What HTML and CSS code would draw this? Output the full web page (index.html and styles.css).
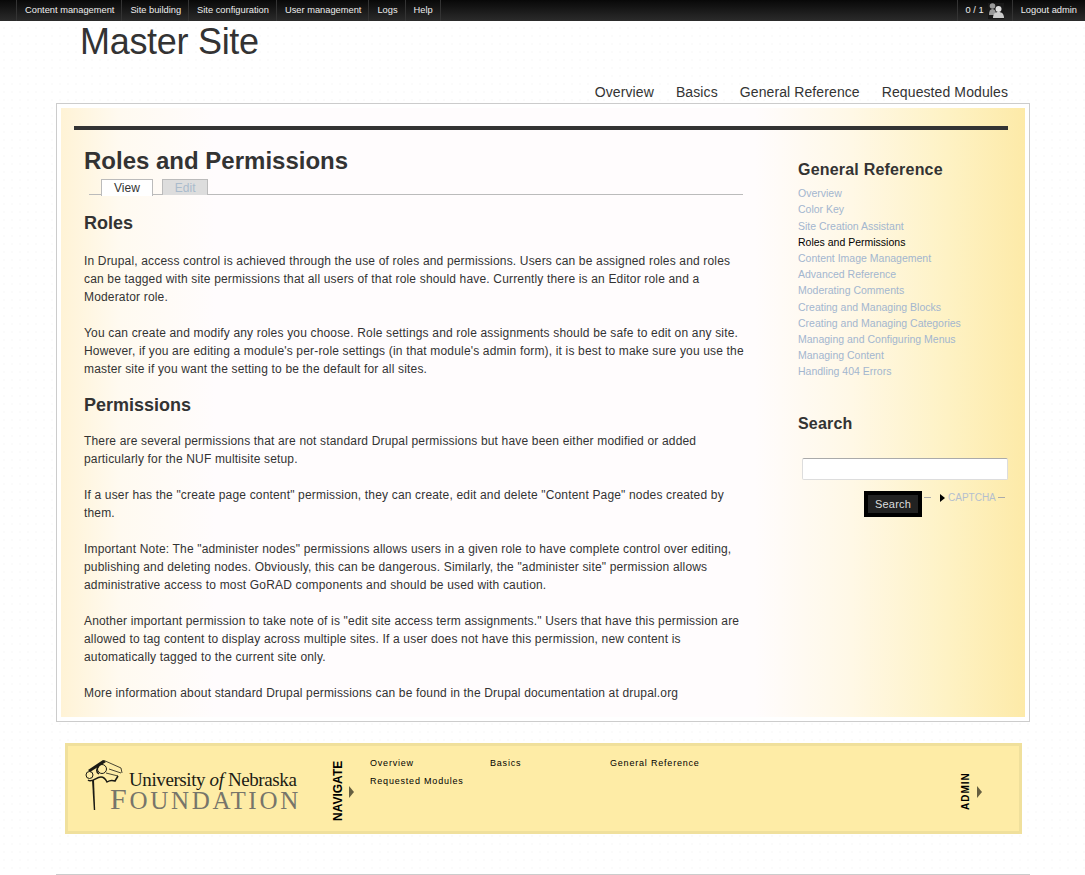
FILE: index.html
```html
<!DOCTYPE html>
<html lang="en">
<head>
	<meta charset="UTF-8">
	<title>Roles and Permissions | Master Site</title>
	<link rel="stylesheet" href="styles.css">
</head>
<body>
	<div class="adminbar">
		<ul class="adminmenu">
			<li>Content management</li>
			<li>Site building</li>
			<li>Site configuration</li>
			<li>User management</li>
			<li>Logs</li>
			<li>Help</li>
		</ul>
		<ul class="adminuser">
			<li><span class="count">0 / 1</span>
				<svg class="users" width="16" height="16" viewBox="0 0 16 16">
					<circle cx="4.500" cy="3" r="2.800" fill="#999"/>
					<path d="M1 12c0-4 1-6 3.500-6S8 8 8 12z" fill="#999"/>
					<circle cx="10.500" cy="6" r="3" fill="#ddd"/>
					<path d="M5 15c0-4 2-6 5.500-6S16 11 16 15z" fill="#ccc"/>
				</svg>
			</li>
			<li>Logout admin</li>
		</ul>
	</div>

	<div class="site">
		<div class="sitename">Master Site</div>
		<ul class="topnav">
			<li>Overview</li>
			<li>Basics</li>
			<li>General Reference</li>
			<li>Requested Modules</li>
		</ul>

		<div class="frame">
			<div class="panel">
				<div class="rule"></div>
				<div class="columns">
					<div class="content">
						<h1>Roles and Permissions</h1>
						<ul class="tabs">
							<li class="active">View</li>
							<li>Edit</li>
						</ul>
						<h2>Roles</h2>
						<p>In Drupal, access control is achieved through the use of roles and permissions. Users can be assigned roles and roles can be tagged with site permissions that all users of that role should have. Currently there is an Editor role and a Moderator role.</p>
						<p>You can create and modify any roles you choose. Role settings and role assignments should be safe to edit on any site. However, if you are editing a module's per-role settings (in that module's admin form), it is best to make sure you use the master site if you want the setting to be the default for all sites.</p>
						<h2>Permissions</h2>
						<p>There are several permissions that are not standard Drupal permissions but have been either modified or added particularly for the NUF multisite setup.</p>
						<p>If a user has the "create page content" permission, they can create, edit and delete "Content Page" nodes created by them.</p>
						<p>Important Note: The "administer nodes" permissions allows users in a given role to have complete control over editing, publishing and deleting nodes. Obviously, this can be dangerous. Similarly, the "administer site" permission allows administrative access to most GoRAD components and should be used with caution.</p>
						<p>Another important permission to take note of is "edit site access term assignments." Users that have this permission are allowed to tag content to display across multiple sites. If a user does not have this permission, new content is automatically tagged to the current site only.</p>
						<p>More information about standard Drupal permissions can be found in the Drupal documentation at drupal.org</p>
					</div>
					<div class="sidebar">
						<h3>General Reference</h3>
						<ul class="sidemenu">
							<li>Overview</li>
							<li>Color Key</li>
							<li>Site Creation Assistant</li>
							<li class="current">Roles and Permissions</li>
							<li>Content Image Management</li>
							<li>Advanced Reference</li>
							<li>Moderating Comments</li>
							<li>Creating and Managing Blocks</li>
							<li>Creating and Managing Categories</li>
							<li>Managing and Configuring Menus</li>
							<li>Managing Content</li>
							<li>Handling 404 Errors</li>
						</ul>
						<h3 class="searchtitle">Search</h3>
						<input class="searchbox" type="text">
						<div class="searchrow">
							<button class="searchbtn" type="button">Search</button>
							<span class="dash"></span>
							<span class="arrow"></span>
							<span class="captcha">CAPTCHA</span>
							<span class="dash"></span>
						</div>
					</div>
				</div>
			</div>
		</div>

		<div class="footer">
			<div class="logo">
				<svg class="capital" width="42" height="52" viewBox="0 0 42 52">
					<path d="M3 10 L18 0 L21 2 L5 12 Z" fill="#1a1a14"/>
					<path d="M18 0 L36 8 L37 13 M24 9 L36 13 M21 13 L33 16" fill="none" stroke="#1a1a14" stroke-width=".8"/>
					<circle cx="4.500" cy="15" r="3.500" fill="none" stroke="#1a1a14" stroke-width="1"/>
					<circle cx="17" cy="9" r="4.500" fill="none" stroke="#1a1a14" stroke-width="1"/>
					<path d="M14 6c-3 3-3 6 0 8M3 20c4 3 8-3 13-3 3 0 5 3 6 5 3-2 5-2 8-1l3-5" fill="none" stroke="#1a1a14" stroke-width="1.500"/>
					<path d="M7 20 L9 20 L10.200 50 L8.800 50 Z" fill="#1a1a14"/>
				</svg>
				<div class="wordmark">
					<div class="uni">University <i>of</i> Nebraska</div>
					<div class="found">Foundation</div>
				</div>
			</div>
			<div class="vlabel nav-label">NAVIGATE</div>
			<span class="footarrow"></span>
			<ul class="footmenu">
				<li>Overview</li>
				<li>Basics</li>
				<li>General Reference</li>
				<li>Requested Modules</li>
			</ul>
			<div class="vlabel admin-label">ADMIN</div>
			<span class="footarrow"></span>
		</div>

		<div class="bottomline"></div>
	</div>
</body>
</html>
```

FILE: styles.css
```css
html,body,ul,li,p,h1,h2,h3{margin: 0;padding: 0;}
ul{list-style: none;}
body{font:12px/18px "Liberation Sans",Arial,sans-serif;color: #333;background-color: #fff;background-image: radial-gradient(#fbfbfb 1px,transparent 1px);background-size: 8px 8px;}

.adminbar{display: flex;justify-content: space-between;height: 21px;background: linear-gradient(#080808,#2b2b2b);color: #eee;font-size: 9.3px;line-height: 21px;}
.adminmenu{display: flex;margin-left: 16px;}
.adminmenu li{padding: 0 7px 0 8px;border-left: 1px solid #333;}
.adminmenu li:last-child{border-right: 1px solid #333;}
.adminuser{display: flex;}
.adminuser li{padding: 0 8px;border-left: 1px solid #333;display: flex;align-items: center;}
.count{margin-right: 4px;}
.users{background: #181818;}

.site{width: 974px;margin-left: 56px;}
.sitename{margin-left: 24px;height: 42px;font-size: 36px;line-height: 42px;letter-spacing: -.3px;color: #333;}
.topnav{display: flex;justify-content: flex-end;gap: 22px;padding: 19px 22px 1px 0;font-size: 14px;line-height: 20px;letter-spacing: .1px;}

.frame{border: 1px solid #ccc;padding: 4px;background: #fff;}
.panel{height: 591px;padding: 18px 17px 0 13px;background: linear-gradient(90deg,#fff3d6 0,#fffaf0 6%,#fffcfd 16%,#fffcfd 72%,#fff8e6 82%,#fef2c4 92%,#fdeaa8 100%);}
.rule{height: 4px;background: #333;}
.columns{display: flex;padding-left: 10px;}
.content{width: 659px;letter-spacing: .17px;}
.content h1{margin-top: 18px;font-size: 24px;line-height: 26px;letter-spacing: 0;}
.tabs{display: flex;margin: 5px 0 0 5px;padding-left: 12px;border-bottom: 1px solid #bbb;height: 15px;letter-spacing: 0;}
.tabs li{height: 15px;margin-right: 9px;padding: 0 12px;border: 1px solid #bbb;border-bottom: 0;background: #ddd;color: #aabbcc;line-height: 16px;}
.tabs li.active{height: 16px;background: #fff;color: #333;}
.content h2{margin: 18px 0 19px;font-size: 18px;line-height: 20px;letter-spacing: 0;}
.content p{margin: 0 -6px 18px 0;}
.content p + h2{margin: -1px 0 17px;}

.sidebar{width: 210px;margin-left: 55px;}
.sidebar h3{margin-top: 30px;font-size: 16px;line-height: 20px;letter-spacing: .2px;}
.sidemenu{margin-top: 5.2px;font-size: 10.5px;line-height: 16.2px;color: #a3b6cf;}
.sidemenu li.current{color: #000;}
.sidebar h3.searchtitle{margin-top: 34.8px;}
.searchbox{display: block;box-sizing: border-box;width: 206px;height: 22px;margin: 24px 0 0 4px;border: 1px solid #ddd;border-top-color: #aaa;border-radius: 2px;background: #fff;}
.searchrow{display: flex;align-items: flex-start;margin-top: 11px;margin-left: 66px;height: 26px;}
.searchbtn{width: 58px;height: 26px;padding: 0;border: 4px solid #000;background: #222;color: #ddd;font: 11px "Liberation Sans",Arial,sans-serif;letter-spacing: .2px;}
.dash{width: 7px;height: 1px;background: #aaa;margin: 6px 0 0 2px;}
.arrow{margin: 3px 0 0 9px;border-left: 5px solid #000;border-top: 4px solid transparent;border-bottom: 4px solid transparent;}
.captcha{margin-left: 3px;font-size: 10px;line-height: 14px;color: #b4bfcf;}

.footer{display: flex;box-sizing: border-box;width: 957px;height: 91px;margin: 21px 0 0 9px;border: 3px solid #f0e09c;background: #feeca6;}
.logo{display: flex;width: 226px;padding: 14px 0 0 17px;}
.capital{flex: none;}
.wordmark{font-family: "Liberation Serif","Times New Roman",serif;color: #1c1c14;margin-left: 2px;padding-top: 10px;}
.uni{font-size: 19px;line-height: 20px;white-space: nowrap;letter-spacing: -.4px;}
.found{margin: -3px 0 0 -19px;font-size: 25px;line-height: 24px;text-transform: uppercase;color: #77756a;white-space: nowrap;letter-spacing: 2.7px;}
.found::first-letter{font-size: 30px;}
.vlabel{writing-mode: vertical-rl;transform: rotate(180deg);font-weight: bold;color: #000;text-align: left;}
.nav-label{margin-left: 21px;height: 60px;margin-top: 15px;font-size: 12px;line-height: 12px;}
.admin-label{margin-top: 26px;height: 38px;font-size: 10px;line-height: 12px;letter-spacing: 1px;}
.footarrow{align-self: flex-start;flex: none;margin: 40px 0 0 5px;width: 0;height: 0;border-left: 5px solid #665f40;border-top: 6px solid transparent;border-bottom: 6px solid transparent;}
.footmenu{display: flex;flex-wrap: wrap;align-content: flex-start;width: 360px;height: 60px;margin: 8px 230px 0 16px;font-size: 9px;letter-spacing: .8px;color: #000;}
.footmenu li{width: 120px;}

.bottomline{height: 1px;margin-top: 40px;background: #ccc;}
```
